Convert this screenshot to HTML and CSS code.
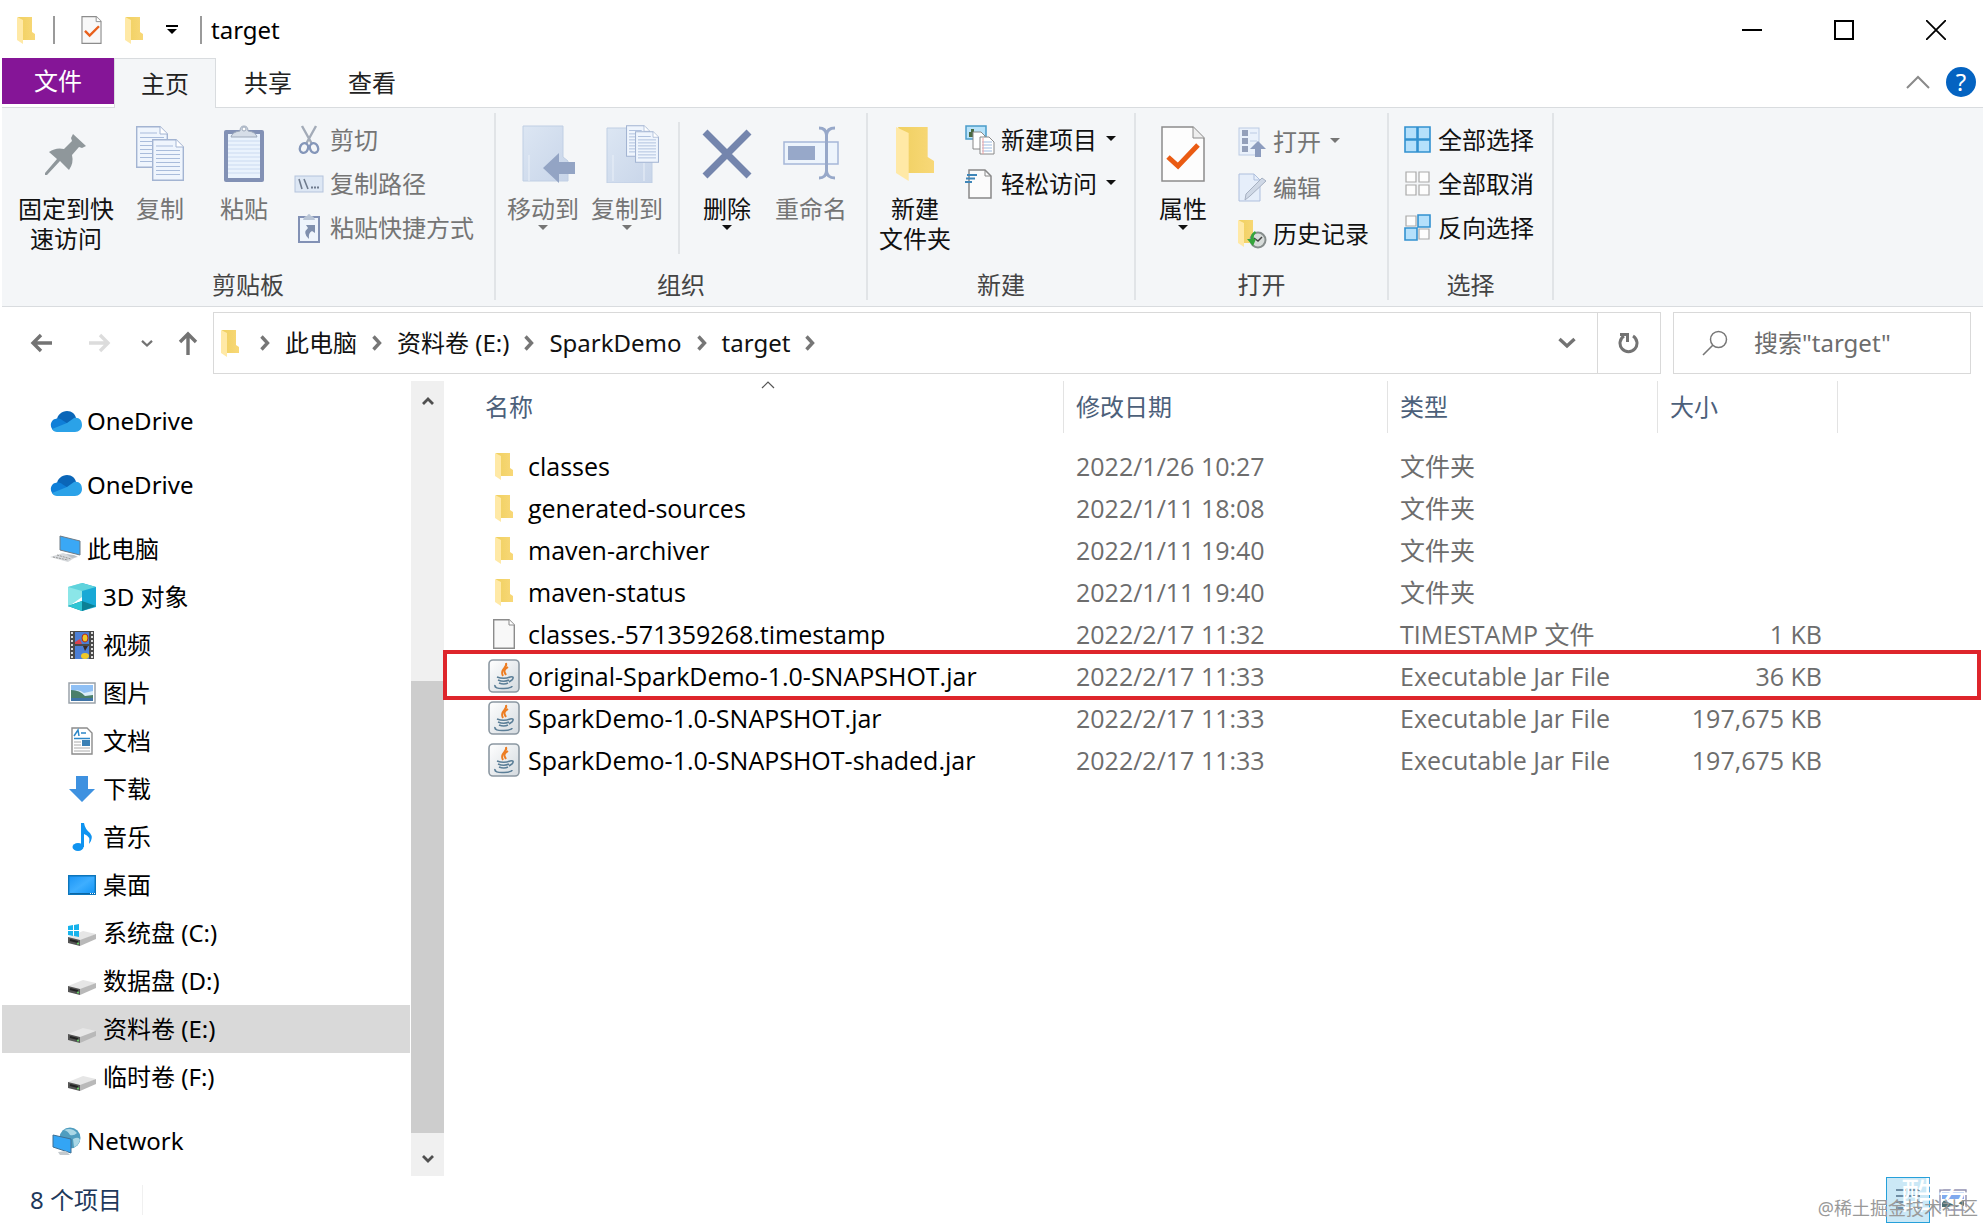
FILE: index.html
```html
<!DOCTYPE html>
<html lang="zh-CN">
<head>
<meta charset="utf-8">
<title>target</title>
<link rel="stylesheet" href="styles.css">
</head>
<body>
<svg class="defs" aria-hidden="true">
  <defs>
    <linearGradient id="gold" x1="0" x2="1"><stop offset="0" stop-color="#f0d060"/><stop offset="1" stop-color="#f8d878"/></linearGradient>
    <linearGradient id="sky" x1="0" y1="0" x2="1" y2="1"><stop offset="0" stop-color="#1a94f5"/><stop offset=".5" stop-color="#3eaeff"/><stop offset="1" stop-color="#1093f5"/></linearGradient>
    <linearGradient id="metal" x1="0" y1="0" x2="1" y2="1"><stop offset="0" stop-color="#fff"/><stop offset="1" stop-color="#d4dadf"/></linearGradient>
    <linearGradient id="pale" x1="0" y1="0" x2="1" y2="1"><stop offset="0" stop-color="#dce6f3"/><stop offset="1" stop-color="#c8d5e9"/></linearGradient>
  </defs>
  <symbol id="folder" viewBox="0 0 18 27"><path d="M1 0H15V15L18 17V23H5Z" fill="url(#gold)"/><path d="M0 0L6 3V27L0 23Z" fill="#ffe9a6"/></symbol>
  <symbol id="page" viewBox="0 0 22 30"><path d="M.7.7H16L21.300 6V29.300H.7Z" fill="#f8f8f8" stroke="#8c8c8c" stroke-width="1.400"/><path d="M16 .7V6H21.300" fill="#fff" stroke="#8c8c8c"/></symbol>
  <symbol id="jar" viewBox="0 0 32 34"><rect x="1" y="1" width="30" height="32" rx="4" fill="url(#metal)" stroke="#8c98a2" stroke-width="1.600"/><path d="M18 4C20 9 11 10 15 17M20 8C15 11 16 13 18 16" fill="none" stroke="#ed7d22" stroke-width="2"/><path d="M9 18Q16 20.500 22 18M10 21Q16 23.500 21 21M11 24Q16 26 20 24M22 18Q27 17 24 21L21 23M7 26Q6 30 16 29.500Q24 29 24 27" fill="none" stroke="#5b7e97" stroke-width="1.600"/></symbol>
  <symbol id="cloud" viewBox="0 0 32 21"><path d="M7 9C7 4 12 0 17 0C22 0 25 3 26 7L17 14L5 11Z" fill="#0a66b8"/><path d="M5 20C1 19-1 13 3 9C6 7 10 7 12 9L20 14L8 20Z" fill="#0f7fd8"/><path d="M17 12L24 7C29 6 32 9 32 14C32 18 29 21 25 21H7C5 21 3 20 2 18Z" fill="#2ba2e8"/></symbol>
  <symbol id="drive" viewBox="0 0 28 15"><path d="M0 6L15 0L28 3L12 10Z" fill="#e6e6e6"/><path d="M0 6L12 9V15L0 12Z" fill="#555"/><path d="M12 9L28 3V8L12 15Z" fill="#b9b9b9"/><path d="M2 9L10 11" stroke="#222" stroke-width="2"/><circle cx="10" cy="12.500" r="1" fill="#6d6"/></symbol>
  <symbol id="caret" viewBox="0 0 10 5"><path d="M0 0H10L5 5Z" fill="currentColor"/></symbol>
  <symbol id="chev" viewBox="0 0 10 16"><path d="M1.500 1.500L7.500 8L1.500 14.500" fill="none" stroke="#767676" stroke-width="3.400"/></symbol>
  <symbol id="chevdown" viewBox="0 0 18 12"><path d="M1.500 2L9 9L16.500 2" fill="none" stroke="currentColor" stroke-width="3.400"/></symbol>
  <symbol id="sheet" viewBox="0 0 32 42"><path d="M.7.7H24L31.300 8V41.300H.7Z" fill="#eff5fd" stroke="#a3b4d2" stroke-width="1.400"/><path d="M24 .7V8H31.300" fill="#fff" stroke="#a3b4d2"/><path d="M4 7H21M4 11.500H28M4 15.500H28M4 19.500H28M4 23.500H28M4 27.500H28M4 31.500H28M4 35.500H28" stroke="#a9bcdb" stroke-width="1.200"/></symbol>
</svg>

<header class="titlebar">
  <svg class="i-folder"><use href="#folder"/></svg>
  <span class="bar"></span>
  <div class="quick">
    <button aria-label="属性"><svg width="21" height="28" viewBox="0 0 22 30"><use href="#page"/><path d="M4 16L9 21L19 11" fill="none" stroke="#e8601c" stroke-width="2.600"/></svg></button>
    <button aria-label="新建文件夹"><svg class="i-folder"><use href="#folder"/></svg></button>
    <button aria-label="自定义快速访问工具栏"><svg width="12" height="10" viewBox="0 0 12 10"><path d="M0 1H12" stroke="#000" stroke-width="2"/><path d="M1 4H11L6 9Z"/></svg></button>
  </div>
  <span class="bar"></span>
  <h1 class="title">target</h1>
  <div class="controls">
    <button aria-label="最小化"><svg width="20" height="20" viewBox="0 0 20 20"><path d="M0 10H20" stroke="#000" stroke-width="2"/></svg></button>
    <button aria-label="最大化"><svg width="20" height="20" viewBox="0 0 20 20"><path d="M1 1H19V19H1Z" fill="none" stroke="#000" stroke-width="2"/></svg></button>
    <button aria-label="关闭"><svg width="20" height="20" viewBox="0 0 20 20"><path d="M0 0L20 20M20 0L0 20" stroke="#000" stroke-width="1.800"/></svg></button>
  </div>
</header>

<nav class="tabs">
  <button class="tab file">文件</button>
  <button class="tab active">主页</button>
  <button class="tab">共享</button>
  <button class="tab">查看</button>
  <div class="tab-tools">
    <button aria-label="折叠功能区"><svg width="24" height="14" viewBox="0 0 24 14"><path d="M1 13L12 2L23 13" fill="none" stroke="#8a8a8a" stroke-width="2"/></svg></button>
    <button class="help" aria-label="帮助">?</button>
  </div>
</nav>

<section class="ribbon">
  <div class="group clipboard">
    <div class="tools">
      <button class="big wide"><svg width="42" height="42" viewBox="0 0 42 42"><path d="M28 1L41 13L37 15L34 14L27 22Q29 30 24 37L15 28L2 42L0 42V40L12 26L4 19Q11 14 19 16L27 8L26 5Z" fill="#8f979b"/></svg><span>固定到快<br>速访问</span></button>
      <button class="big" disabled><svg width="48" height="56" viewBox="0 0 48 56"><use href="#sheet" width="32" height="42"/><use href="#sheet" x="16" y="13" width="32" height="42"/></svg><span>复制</span></button>
      <button class="big" disabled><svg width="42" height="58" viewBox="0 0 42 58"><rect x="1" y="5" width="40" height="52" rx="2" fill="#8291b5"/><path d="M5 9H37V53H5Z" fill="#eaf3fd"/><path d="M5 16H37M5 20H37M5 24H37M5 28H37M5 32H37M5 36H37M5 40H37M5 44H37M5 48H37" stroke="#cbdaf0"/><path d="M8 12Q9 7 17 6Q17 1 21 1Q25 1 25 6Q33 7 34 12Z" fill="#d6dee8" stroke="#9da9ba"/><circle cx="21" cy="4" r="2" fill="#fff" stroke="#9da9ba"/></svg><span>粘贴</span></button>
      <div class="list">
        <button class="small" disabled><svg width="30" height="30" viewBox="0 0 30 30"><path d="M8 1L18 19M22 1L12 19" stroke="#a3abb8" stroke-width="2.400"/><ellipse cx="10" cy="23" rx="4" ry="5" fill="none" stroke="#8496b9" stroke-width="2.400" transform="rotate(20 10 23)"/><ellipse cx="20" cy="23" rx="4" ry="5" fill="none" stroke="#8496b9" stroke-width="2.400" transform="rotate(-20 20 23)"/></svg>剪切</button>
        <button class="small" disabled><svg width="30" height="30" viewBox="0 0 30 30"><rect x="1" y="7" width="28" height="16" fill="#dde7f4" stroke="#b4c3dc"/><path d="M5 10L8 20M10 10L14 20" stroke="#6f7b8d" stroke-width="1.600"/><path d="M17 18.500H25" stroke="#6f7b8d" stroke-width="2" stroke-dasharray="2 1"/></svg>复制路径</button>
        <button class="small" disabled><svg width="30" height="30" viewBox="0 0 30 30"><path d="M5 4H25V29H5Z" fill="#eef4fc" stroke="#8291b5" stroke-width="2"/><path d="M9 7Q10 3 13 3Q15-1 17 3Q20 3 21 7Z" fill="#b9c5d6"/><path d="M12 12H21V20L18 18Q14 20 15 26Q8 20 14 15Z" fill="#7f8fae"/></svg>粘贴快捷方式</button>
      </div>
    </div>
    <h2>剪贴板</h2>
  </div>

  <div class="group organize">
    <div class="tools">
      <button class="big" disabled><svg width="66" height="58" viewBox="-12 0 66 58"><path d="M1 1H41V32L46 36V56H1Z" fill="url(#pale)" stroke="#c0cfe4"/><path d="M7 30V56" stroke="#eaf0f8"/><path d="M21 43L37 28V37H53V49H37V58Z" fill="#93a4c4"/></svg><span>移动到</span><svg class="caret"><use href="#caret"/></svg></button>
      <button class="big" disabled><svg width="66" height="58" viewBox="-12 0 66 58"><path d="M1 3H41V32L46 36V58H1Z" fill="url(#pale)" stroke="#c0cfe4"/><path d="M7 30V56M38 38V56" stroke="#eaf0f8"/><use href="#sheet" x="20" y="0" width="24" height="32"/><use href="#sheet" x="29" y="6" width="24" height="32"/></svg><span>复制到</span><svg class="caret"><use href="#caret"/></svg></button>
      <span class="split"></span>
      <button class="big"><svg width="50" height="54" viewBox="0 0 50 54"><path d="M3 5L47 49M47 5L3 49" stroke="#7485ad" stroke-width="7"/></svg><span>删除</span><svg class="caret"><use href="#caret"/></svg></button>
      <button class="big" disabled><svg width="56" height="56" viewBox="0 0 56 56"><rect x="1" y="16" width="54" height="22" fill="#edf4fc" stroke="#a5b7d8" stroke-width="1.500"/><rect x="5" y="20" width="27" height="14" fill="#97a8c9"/><path d="M36 2Q43 2 43.500 9V45Q43 52 36 52M52 2Q44 2 43.500 9V45Q44 52 52 52" fill="none" stroke="#97a8c9" stroke-width="3"/></svg><span>重命名</span></button>
    </div>
    <h2>组织</h2>
  </div>

  <div class="group">
    <div class="tools">
      <button class="big"><svg width="38" height="54" viewBox="0 0 18 27" preserveAspectRatio="none"><use href="#folder"/></svg><span>新建<br>文件夹</span></button>
      <div class="list">
        <button class="small"><svg width="30" height="30" viewBox="0 0 30 30"><rect x="1" y="1" width="20" height="13" fill="#b8e3fa" stroke="#4a9cc9" stroke-width="1.500"/><path d="M4 12V7H6V4H9V9H12V12Z" fill="#4b6b42"/><path d="M8 7H16L20 11V24H8Z" fill="#fff" stroke="#888"/><path d="M15 12H24L29 17V29H15Z" fill="#fff" stroke="#888"/><path d="M17 17H27M17 20H27M17 23H27M17 26H27" stroke="#9dbbe0"/><path d="M18 13V29" stroke="#f0a0a0"/></svg>新建项目<svg class="caret"><use href="#caret"/></svg></button>
        <button class="small"><svg width="30" height="30" viewBox="0 0 30 30"><path d="M4 1H20L26 7V29H4Z" fill="#fbfbfb" stroke="#888" stroke-width="1.500"/><path d="M20 1V7H26" fill="none" stroke="#888"/><path d="M2 6H12M1 9.500H10M0 13H7" stroke="#3f86b8" stroke-width="2"/></svg>轻松访问<svg class="caret"><use href="#caret"/></svg></button>
      </div>
    </div>
    <h2>新建</h2>
  </div>

  <div class="group">
    <div class="tools">
      <button class="big"><svg width="44" height="56" viewBox="0 0 44 56"><path d="M1 1H32L43 12V55H1Z" fill="#fdfdfd" stroke="#8c8c8c" stroke-width="1.500"/><path d="M32 1V12H43" fill="#eee" stroke="#8c8c8c"/><path d="M7 31L17 40L37 19" fill="none" stroke="#ea5b13" stroke-width="5"/></svg><span>属性</span><svg class="caret"><use href="#caret"/></svg></button>
      <div class="list loose">
        <button class="small" disabled><svg width="30" height="30" viewBox="0 0 30 30"><rect x="2" y="1" width="20" height="27" fill="#eaf1fb" stroke="#bccbe4"/><path d="M5 3H11V9H5ZM5 11H11V17H5ZM5 19H11V25H5Z" fill="#94a0ba"/><path d="M13 6H20M13 14H20" stroke="#bccbe4"/><path d="M21 14L29 22H24V30H18V22H13Z" fill="#8c9cbe"/></svg>打开<svg class="caret"><use href="#caret"/></svg></button>
        <button class="small" disabled><svg width="30" height="30" viewBox="0 0 30 30"><path d="M2 1H17L23 7V28H2Z" fill="#e6eefa" stroke="#aebfdd"/><path d="M17 1V7H23" fill="none" stroke="#aebfdd"/><path d="M25 5L29 8L13 23L8 27L9 21Z" fill="#cfd8e6" stroke="#a7b1c2"/></svg>编辑</button>
        <button class="small"><svg width="30" height="30" viewBox="0 0 30 30"><use href="#folder" x="0" y="1" width="20" height="27"/><circle cx="21" cy="21" r="7.500" fill="#d7dcda" stroke="#868d8c" stroke-width="2"/><path d="M17 19L21 22L25 18" fill="none" stroke="#444" stroke-width="1.500"/><path d="M18 12Q13 15 14 20H10L16 27L19 20H17Q16 16 19 14Z" fill="#35a53c"/></svg>历史记录</button>
      </div>
    </div>
    <h2>打开</h2>
  </div>

  <div class="group">
    <div class="tools">
      <div class="list select">
        <button class="small"><svg width="28" height="28" viewBox="0 0 28 28"><path d="M1 1H13V13H1ZM14 1H26V13H14ZM1 14H13V26H1ZM14 14H26V26H14Z" fill="#b5e0fb" stroke="#3291d0" stroke-width="1.600"/></svg>全部选择</button>
        <button class="small"><svg width="28" height="28" viewBox="0 0 28 28"><path d="M2 2H12V12H2ZM15 2H25V12H15ZM2 15H12V25H2ZM15 15H25V25H15Z" fill="#fdfdfd" stroke="#a9a9a9" stroke-width="1.200"/></svg>全部取消</button>
        <button class="small"><svg width="28" height="28" viewBox="0 0 28 28"><path d="M2 2H12V12H2ZM15 15H25V25H15Z" fill="#fdfdfd" stroke="#a9a9a9" stroke-width="1.200"/><path d="M14 1H26V13H14ZM1 14H13V26H1Z" fill="#b5e0fb" stroke="#3291d0" stroke-width="1.600"/></svg>反向选择</button>
      </div>
    </div>
    <h2>选择</h2>
  </div>
</section>

<div class="navrow">
  <div class="arrows">
    <button aria-label="后退"><svg width="22" height="20" viewBox="0 0 22 20"><path d="M22 10H3M11 2L3 10L11 18" fill="none" stroke="#737373" stroke-width="3.400"/></svg></button>
    <button aria-label="前进"><svg width="22" height="20" viewBox="0 0 22 20"><path d="M0 10H19M11 2L19 10L11 18" fill="none" stroke="#dcdcdc" stroke-width="3.400"/></svg></button>
    <button class="recent" aria-label="最近浏览的位置"><svg width="12" height="9" viewBox="0 0 18 12"><use href="#chevdown"/></svg></button>
    <button aria-label="上移"><svg width="20" height="24" viewBox="0 0 20 24"><path d="M10 24V3M2 11L10 3L18 11" fill="none" stroke="#737373" stroke-width="3.400"/></svg></button>
  </div>
  <div class="address">
    <svg class="i-folder"><use href="#folder"/></svg>
    <svg class="chev"><use href="#chev"/></svg><a href="#">此电脑</a>
    <svg class="chev"><use href="#chev"/></svg><a href="#">资料卷 (E:)</a>
    <svg class="chev"><use href="#chev"/></svg><a href="#">SparkDemo</a>
    <svg class="chev"><use href="#chev"/></svg><a href="#">target</a>
    <svg class="chev"><use href="#chev"/></svg>
    <button class="history" aria-label="以前的位置"><svg width="18" height="12"><use href="#chevdown"/></svg></button>
    <button class="refresh" aria-label="刷新"><svg width="22" height="22" viewBox="0 0 22 22"><path d="M15 4A8.500 8.500 0 1 1 6 4" fill="none" stroke="#737373" stroke-width="3"/><path d="M2 2.500H9.500V10" fill="none" stroke="#737373" stroke-width="3"/></svg></button>
  </div>
  <label class="search">
    <svg width="26" height="26" viewBox="0 0 26 26"><circle cx="16.500" cy="9.500" r="8" fill="none" stroke="#777" stroke-width="1.500"/><path d="M11 15L1 25" stroke="#777" stroke-width="1.600"/></svg>
    <input type="text" placeholder='搜索"target"' aria-label="搜索">
  </label>
</div>

<div class="content">
  <nav class="tree">
    <ul>
      <li><a href="#"><svg width="32" height="21"><use href="#cloud"/></svg>OneDrive</a></li>
      <li class="gap"><a href="#"><svg width="32" height="21"><use href="#cloud"/></svg>OneDrive</a></li>
      <li class="gap"><a href="#"><svg width="32" height="28" viewBox="0 0 32 28"><path d="M10 1L30 6V20L10 15Z" fill="#3aa8f5" stroke="#6d7a85"/><path d="M0 22L13 18L26 22L18 27Z" fill="#d7dadd"/><path d="M3 22L18 25M7 20L21 24" stroke="#999" stroke-dasharray="2 1"/><path d="M16 19L24 20L28 22L22 23Z" fill="#bcc1c6"/></svg>此电脑</a></li>
      <li class="sub"><a href="#"><svg width="28" height="28" viewBox="0 0 28 28"><path d="M0 4L14 0V14L0 24Z" fill="#8be6e8"/><path d="M14 0L28 4V24L14 28Z" fill="#18a9d6"/><path d="M0 4L14 0L28 4L14 8Z" fill="#5fd3dc"/><path d="M0 23L14 18L28 23L14 28Z" fill="#0b8095"/><path d="M0 23L14 18V28Z" fill="#2fc5d4"/></svg>3D 对象</a></li>
      <li class="sub"><a href="#"><svg width="28" height="28" viewBox="0 0 28 28"><rect x="2" width="24" height="28" fill="#4a4a4a"/><path d="M4 1V28M24 1V28" stroke="#ddd" stroke-width="2" stroke-dasharray="2 2"/><path d="M7 1H21V13H7ZM7 15H21V28H7Z" fill="#4c7fd6"/><path d="M7 11L12 8L14 13H7Z" fill="#d9434e"/><ellipse cx="17" cy="7" rx="3" ry="4" fill="#f0c828" stroke="#b3281f"/><path d="M15 15H20L17 20Z" fill="#3a2a22"/><ellipse cx="17" cy="25" rx="4" ry="3" fill="#f0c828"/></svg>视频</a></li>
      <li class="sub"><a href="#"><svg width="28" height="28" viewBox="0 0 28 28"><path d="M1 4H27V24H1Z" fill="#fff" stroke="#9aa3aa" stroke-width="1.500"/><path d="M3 6H25V22H3Z" fill="#8fc0f5"/><path d="M3 13Q10 9 16 14L25 12V17H3Z" fill="#dceefa"/><path d="M3 11Q12 11 17 17L25 16V20H3Z" fill="#4b7f6a"/><path d="M3 19H25V22H3Z" fill="#3f74a8"/></svg>图片</a></li>
      <li class="sub"><a href="#"><svg width="28" height="28" viewBox="0 0 28 28"><path d="M4 1H19L24 6V27H4Z" fill="#fff" stroke="#8c8c8c" stroke-width="1.400"/><path d="M6 9L10 3L11 9M13 6H18M6 11.500H22" stroke="#2c87c8" stroke-width="1.500" fill="none"/><path d="M6 15H13M6 18H13M6 21H22M6 24H22" stroke="#aaa"/><path d="M14 13H22V19H14Z" fill="#3a80b5"/></svg>文档</a></li>
      <li class="sub"><a href="#"><svg width="28" height="28" viewBox="0 0 28 28"><path d="M8 1H20V14H27L14 27L1 14H8Z" fill="#3e91e0"/></svg>下载</a></li>
      <li class="sub"><a href="#"><svg width="28" height="28" viewBox="0 0 28 28"><ellipse cx="10" cy="24" rx="5.500" ry="4" fill="#0f93f0"/><path d="M13 0H16Q17 6 22 10Q26 15 21 21Q23 13 16 11V24H13Z" fill="#0f93f0"/></svg>音乐</a></li>
      <li class="sub"><a href="#"><svg width="28" height="28" viewBox="0 0 28 28"><path d="M.7 4.700H27.300V23.300H.7Z" fill="url(#sky)" stroke="#0c75bb" stroke-width="1.400"/><path d="M2 22.500H26" stroke="#0b66a4"/><path d="M22 22.500H27" stroke="#fff" stroke-dasharray="1 1"/></svg>桌面</a></li>
      <li class="sub"><a href="#"><svg width="28" height="28" viewBox="0 0 28 28"><use href="#drive" y="12" width="28" height="15"/><path d="M0 7L5 6V11H0ZM6 6L11 5V11H6ZM0 12H5V17L0 16ZM6 12H11V18L6 17Z" fill="#17b3ec"/></svg>系统盘 (C:)</a></li>
      <li class="sub"><a href="#"><svg width="28" height="28" viewBox="0 0 28 28"><use href="#drive" y="13" width="28" height="15"/></svg>数据盘 (D:)</a></li>
      <li class="sub selected"><a href="#" aria-current="true"><svg width="28" height="28" viewBox="0 0 28 28"><use href="#drive" y="13" width="28" height="15"/></svg>资料卷 (E:)</a></li>
      <li class="sub"><a href="#"><svg width="28" height="28" viewBox="0 0 28 28"><use href="#drive" y="13" width="28" height="15"/></svg>临时卷 (F:)</a></li>
      <li class="gap"><a href="#"><svg width="32" height="28" viewBox="0 0 32 28"><circle cx="20" cy="11" r="10.500" fill="#4f9dbf"/><path d="M14 3Q22 0 27 6Q24 9 20 8Q18 4 14 3ZM23 12Q29 9 30 13Q28 19 24 20Z" fill="#a9d7e6"/><path d="M3 8L21 12V26L3 20Z" fill="#33a5f5" stroke="#3f6f92"/><path d="M8 25L16 24L20 28H10Z" fill="#c3c9cd"/></svg>Network</a></li>
    </ul>
  </nav>
  <div class="scrollbar">
    <button aria-label="向上滚动"><svg width="12" height="9" viewBox="0 0 12 9"><path d="M1 8L6 3L11 8" fill="none" stroke="#505050" stroke-width="2.800"/></svg></button>
    <div class="track"></div>
    <div class="thumb"></div>
    <button aria-label="向下滚动"><svg width="12" height="9" viewBox="0 0 12 9"><path d="M1 1L6 6L11 1" fill="none" stroke="#505050" stroke-width="2.800"/></svg></button>
  </div>
  <main class="files">
    <table>
      <colgroup><col class="c-name"><col class="c-date"><col class="c-type"><col class="c-size"><col></colgroup>
      <thead>
        <tr><th>名称<svg class="sort" width="14" height="8" viewBox="0 0 14 8"><path d="M1 7L7 1L13 7" fill="none" stroke="#555" stroke-width="1.200"/></svg></th><th>修改日期</th><th>类型</th><th>大小</th><td></td></tr>
      </thead>
      <tbody>
        <tr><td><span class="name"><svg class="i-folder"><use href="#folder"/></svg>classes</span></td><td>2022/1/26 10:27</td><td>文件夹</td><td></td><td></td></tr>
        <tr><td><span class="name"><svg class="i-folder"><use href="#folder"/></svg>generated-sources</span></td><td>2022/1/11 18:08</td><td>文件夹</td><td></td><td></td></tr>
        <tr><td><span class="name"><svg class="i-folder"><use href="#folder"/></svg>maven-archiver</span></td><td>2022/1/11 19:40</td><td>文件夹</td><td></td><td></td></tr>
        <tr><td><span class="name"><svg class="i-folder"><use href="#folder"/></svg>maven-status</span></td><td>2022/1/11 19:40</td><td>文件夹</td><td></td><td></td></tr>
        <tr><td><span class="name"><svg class="i-page"><use href="#page"/></svg>classes.-571359268.timestamp</span></td><td>2022/2/17 11:32</td><td>TIMESTAMP 文件</td><td>1 KB</td><td></td></tr>
        <tr class="marked"><td><span class="name"><svg class="i-jar"><use href="#jar"/></svg>original-SparkDemo-1.0-SNAPSHOT.jar</span></td><td>2022/2/17 11:33</td><td>Executable Jar File</td><td>36 KB</td><td></td></tr>
        <tr><td><span class="name"><svg class="i-jar"><use href="#jar"/></svg>SparkDemo-1.0-SNAPSHOT.jar</span></td><td>2022/2/17 11:33</td><td>Executable Jar File</td><td>197,675 KB</td><td></td></tr>
        <tr><td><span class="name"><svg class="i-jar"><use href="#jar"/></svg>SparkDemo-1.0-SNAPSHOT-shaded.jar</span></td><td>2022/2/17 11:33</td><td>Executable Jar File</td><td>197,675 KB</td><td></td></tr>
      </tbody>
    </table>
  </main>
</div>

<footer class="status">
  <span class="count">8 个项目</span>
  <div class="views">
    <button class="on" aria-label="详细信息"><svg width="28" height="26" viewBox="0 0 28 26"><path d="M2 3H12M15 3H26M2 9H12M15 9H26M2 15H12M15 15H26M2 21H12M15 21H26" stroke="#52708a" stroke-width="1.500"/></svg></button>
    <button aria-label="大缩略图"><svg width="28" height="22" viewBox="0 0 28 22"><path d="M1 1H27V21H1Z" fill="#fff" stroke="#8f8fb0" stroke-width="1.400"/><path d="M3 3H25V10H3Z" fill="#7fa9ee"/><path d="M3 14Q8 6 13 14L25 12V18H3Z" fill="#4e6e72"/></svg></button>
  </div>
  <span class="brand">酷安</span>
  <span class="watermark">@稀土掘金技术社区</span>
</footer>
</body>
</html>
```
FILE: styles.css
```css
* { box-sizing: border-box; }
body {
  margin: 0;
  min-height: 100vh;
  padding: 0 2px;
  display: flex;
  flex-direction: column;
  background: #fff;
  color: #111;
  font: 24px/30px "Noto Sans", "Noto Sans CJK SC", sans-serif;
}
button {
  display: flex;
  align-items: center;
  justify-content: center;
  margin: 0;
  padding: 0;
  border: 0;
  background: none;
  color: inherit;
  font: inherit;
}
a { color: inherit; text-decoration: none; }
svg { flex: none; display: block; }
.defs { position: absolute; width: 0; height: 0; }
.i-folder { width: 18px; height: 27px; }
.i-page { width: 22px; height: 30px; }
.i-jar { width: 32px; height: 34px; }
.caret { width: 10px; height: 5px; }

/* Title bar */
.titlebar { display: flex; align-items: center; height: 58px; padding: 2px 0 0 15px; }
.bar { width: 2px; height: 28px; margin-left: 18px; background: #9a9a9a; }
.quick { display: flex; gap: 23px; margin: 0 4px 0 26px; }
.title { margin: 0 0 0 9px; font-size: 24px; font-weight: 400; color: #000; }
.controls { display: flex; margin: 0 1px 0 auto; }
.controls button { width: 92px; height: 56px; }

/* Ribbon tabs */
.tabs { display: flex; height: 49px; }
.tab { width: 104px; height: 50px; color: #222; }
.tab.file { width: 112px; height: 46px; background: #851597; color: #fff; }
.tab.active { position: relative; width: 102px; border: 1px solid #d9dcdf; border-bottom: 0; background: #f4f6f8; }
.tab-tools { display: flex; align-items: center; gap: 16px; margin-left: auto; padding: 0 7px 2px 0; }
.help { width: 30px; height: 30px; border-radius: 50%; background: #0463c1; color: #fff; }

/* Ribbon */
.ribbon { display: flex; height: 200px; padding: 5px 0 6px; border: 1px solid #d9dcdf; border-width: 1px 0; background: #f4f6f8; }
.group { display: flex; flex-direction: column; padding-top: 5px; border-right: 2px solid #e1e4e7; }
.group h2 { margin: auto 0 0; font-size: 24px; font-weight: 400; text-align: center; color: #444; }
.tools { display: flex; height: 145px; padding: 0 18px 0 5px; }
.clipboard .tools { padding: 0 20px 0 12px; }
.organize .tools { padding-right: 13px; }
.big { display: grid; grid-template-rows: 64px auto 1fr; justify-content: center; justify-items: center; align-items: start; row-gap: 8px; width: 84px; padding-top: 4px; white-space: nowrap; }
.big.wide { width: 104px; }
.big > svg:first-child { margin: auto 0; }
.big .caret { margin-top: -7px; }
.small { gap: 6px; height: 44px; }
.small .caret { margin: 0 0 4px 3px; }
.list { display: flex; flex-direction: column; align-items: flex-start; margin-left: 8px; }
.list.loose { gap: 2px; margin-left: 12px; padding-top: 2px; }
.list.select { margin-left: 10px; }
button:disabled { color: #757575; }
.split { width: 2px; height: 132px; margin: 4px 5px 0 9px; background: #e1e4e7; }

/* Navigation row */
.navrow { display: flex; height: 67px; padding-top: 5px; }
.arrows { display: flex; align-items: center; justify-content: space-between; width: 211px; padding: 0 15px 0 28px; color: #737373; }
.recent { margin: 0 -12px 0 -8px; }
.address { display: flex; flex: 1; align-items: center; gap: 15px; height: 62px; padding-left: 7px; border: 1px solid #d9d9d9; color: #111; }
.chev { width: 10px; height: 16px; }
.address .i-folder + .chev { margin-left: 6px; }
.history { margin-left: auto; padding: 0 6px; color: #737373; }
.refresh { align-self: stretch; width: 63px; border-left: 1px solid #d9d9d9; }
.search { display: flex; align-items: center; gap: 26px; width: 298px; height: 62px; margin: 0 12px; padding-left: 28px; border: 1px solid #d9d9d9; }
.search input { width: 100%; min-width: 0; border: 0; padding: 0; outline: 0; background: none; font: inherit; }
.search input::placeholder { color: #6d6d6d; opacity: 1; }

/* Content */
.content { display: flex; flex: 1; padding-top: 7px; }
.tree { width: 409px; padding: 16px 1px 0 0; color: #000; }
.tree ul { margin: 0; padding: 0; list-style: none; }
.tree a { display: flex; align-items: center; gap: 5px; height: 48px; padding-left: 48px; }
.tree .sub a { gap: 7px; padding-left: 66px; }
.tree .gap { margin-top: 16px; }
.selected { background: #d9d9d9; }
.scrollbar { display: flex; flex-direction: column; width: 33px; background: #f0f0f0; }
.scrollbar button { height: 43px; padding-top: 10px; }
.scrollbar button:first-child { height: 38px; padding: 0; }
.track { flex: 262; }
.thumb { flex: 453; background: #cdcdcd; }

/* File list */
.files { flex: 1; }
table { width: 100%; border-collapse: separate; border-spacing: 0; table-layout: fixed; }
.c-name { width: 620px; }
.c-date { width: 324px; }
.c-type { width: 270px; }
.c-size { width: 180px; }
thead tr { height: 52px; }
th { position: relative; padding: 0 12px; border-right: 1px solid #e3e3e3; font-weight: 400; text-align: left; color: #4c607a; }
th:first-child { padding-left: 41px; }
.sort { position: absolute; top: 0; right: 288px; }
tbody { font-family: "Open Sans", "Noto Sans CJK SC", sans-serif; font-size: 25px; }
tbody::before { content: ""; display: block; height: 12px; }
tbody tr { height: 42px; }
td { padding: 0 12px; color: #6d6d6d; white-space: nowrap; }
td:nth-child(4) { padding-right: 16px; text-align: right; }
.name { display: grid; grid-template-columns: 32px auto; align-items: center; justify-items: center; justify-content: start; column-gap: 8px; margin-left: 32px; color: #000; }
.marked { position: relative; }
.marked::after { content: ""; position: absolute; inset: -5px 2px -3px -1px; border: 4px solid #de252b; }

/* Status bar */
.status { position: relative; display: flex; align-items: center; height: 48px; padding: 0 16px 0 28px; color: #1e395b; }
.count { padding-right: 20px; border-right: 1px solid #f0f0f0; }
.views { display: flex; align-items: center; gap: 9px; margin-left: auto; }
.views button { height: 46px; }
.views .on { width: 44px; border: 1px solid #26a0da; background: #cbe8f6; }
.brand { position: absolute; right: 10px; top: 0; color: #fff; font-size: 36px; line-height: 40px; }
.watermark { position: absolute; right: 5px; bottom: 2px; color: #999; font-size: 18px; line-height: 28px; }
```
